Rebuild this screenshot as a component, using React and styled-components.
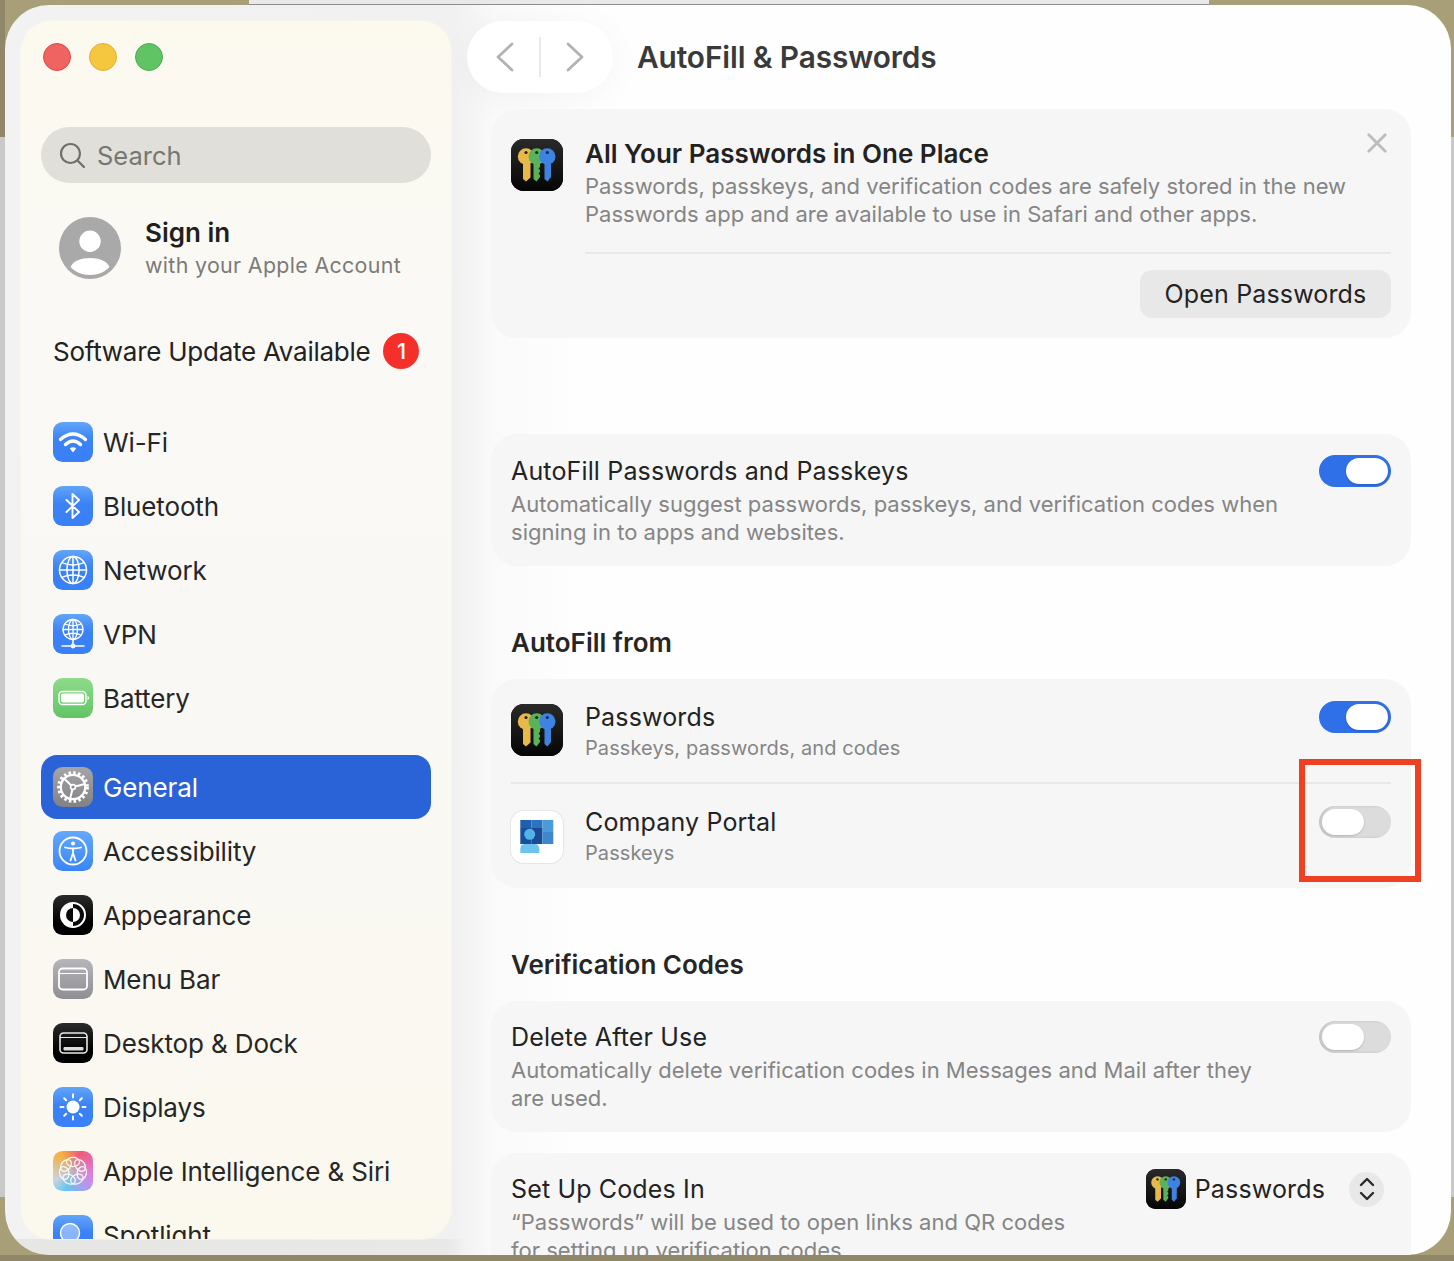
import React from "react";
import styled, { createGlobalStyle } from "styled-components";

const Global = createGlobalStyle`
  html, body { margin: 0; padding: 0; background: #a89e78; overflow: hidden; }
  * { box-sizing: border-box; }
  body { font-family: Inter, "Liberation Sans", sans-serif; -webkit-font-smoothing: antialiased; }
`;

const Desktop = styled.div`
  width: 1454px;
  height: 1261px;
  padding: 5px 3px 6px 5px;
  background:
    linear-gradient(#e9e9e9, #e9e9e9) 249px 0 / 960px 4px no-repeat,
    linear-gradient(#8e8d88, #8e8d88) 249px 4px / 960px 1px no-repeat,
    linear-gradient(#8f8767, #8f8767) 0 0 / 5px 137px no-repeat,
    linear-gradient(#c9c9c9, #c9c9c9) 0 137px / 5px 1060px no-repeat,
    linear-gradient(#c9c9c9, #c9c9c9) 1451px 137px / 3px 1060px no-repeat,
    linear-gradient(#8f8767, #8f8767) 0 1255px / 1454px 6px no-repeat,
    #a89e78;
`;

const Window = styled.div`
  height: 100%;
  display: flex;
  gap: 0;
  padding: 16px 0 0 16px;
  border-radius: 44px;
  overflow: hidden;
  background:
    linear-gradient(90deg, #e6e6e4 0, #e8e8e7 440px, rgba(255,255,255,0) 462px) 0 100% / 100% 16px no-repeat,
    linear-gradient(90deg, #f2f2f3 0, #f1f1f2 451px, #fafafa 490px, #fefefe 570px, #fefefe 100%);
`;

const Sidebar = styled.aside`
  flex: 0 0 430px;
  height: 1218px;
  padding: 22px 20px 0;
  border-radius: 30px;
  overflow: hidden;
  background: linear-gradient(#fcf9ee 0, #faf9f5 260px, #f9f8f5 640px, #fbf8ee 1218px);
  box-shadow: 0 0 0 1px rgba(250, 248, 225, 0.6);
`;

const Lights = styled.div`
  display: flex;
  gap: 18px;
  padding-left: 2px;
`;

const Light = styled.span`
  width: 28px;
  height: 28px;
  border-radius: 50%;
  background: ${(p) => p.$fill};
  border: 1px solid ${(p) => p.$edge};
`;

const SearchBox = styled.div`
  margin-top: 56px;
  height: 56px;
  border-radius: 28px;
  background: #e0dfda;
  display: flex;
  align-items: center;
  gap: 12px;
  padding-left: 18px;
  color: #77766f;
  font-size: 25.5px;
`;

const Account = styled.div`
  margin-top: 34px;
  display: flex;
  align-items: flex-start;
  gap: 24px;
  padding-left: 18px;
`;

const AccountName = styled.div`
  font-size: 26px;
  font-weight: 600;
  color: #1f1f1f;
  line-height: 32px;
`;

const AccountSub = styled.div`
  font-size: 21.4px;
  color: #7b7b78;
  line-height: 30px;
  margin-top: 1px;
  letter-spacing: 0.33px;
`;

const UpdateRow = styled.div`
  margin-top: 46px;
  height: 50px;
  padding-left: 12px;
  display: flex;
  align-items: center;
  gap: 13px;
  font-size: 26px;
  color: #222;
  letter-spacing: -0.26px;
`;

const Badge = styled.span`
  width: 36px;
  height: 36px;
  border-radius: 50%;
  background: #f5302b;
  color: #fff;
  font-size: 22px;
  font-weight: 500;
  display: flex;
  align-items: center;
  justify-content: center;
`;

const NavGroup = styled.div`
  margin-top: ${(p) => p.$top}px;
  display: flex;
  flex-direction: column;
`;

const NavRow = styled.div`
  height: 64px;
  flex: none;
  display: flex;
  align-items: center;
  gap: 10px;
  padding-left: 12px;
  border-radius: 16px;
  font-size: 26px;
  letter-spacing: -0.13px;
  color: ${(p) => (p.$active ? "#fff" : "#262626")};
  background: ${(p) => (p.$active ? "#2a63d8" : "transparent")};
`;

const Tile = styled.span`
  width: ${(p) => p.$size || 40}px;
  height: ${(p) => p.$size || 40}px;
  flex: none;
  border-radius: ${(p) => (p.$size || 40) * 0.24}px;
  background: ${(p) => p.$bg};
  box-shadow: ${(p) => p.$ring ? "0 0 0 1px #e6e6e6" : "none"};
  display: block;
  overflow: hidden;
  svg { display: block; width: 100%; height: 100%; }
`;

const Main = styled.main`
  flex: 1;
  min-width: 0;
  padding: 0 0 0 16px;
  height: 1300px;
`;

const Toolbar = styled.header`
  height: 72px;
  display: flex;
  align-items: center;
  gap: 24px;
  margin-bottom: 16px;
`;

const NavPill = styled.div`
  width: 146px;
  height: 72px;
  border-radius: 36px;
  background: #ffffff;
  box-shadow: 0 4px 34px rgba(0, 0, 0, 0.045);
  display: flex;
  align-items: center;
  justify-content: space-between;
  padding: 0 28px;
`;

const PillDivider = styled.span`
  width: 2px;
  height: 40px;
  background: #e9e9e9;
`;

const Title = styled.h1`
  margin: 0;
  font-size: 29.8px;
  font-weight: 600;
  color: #3a3a3a;
  letter-spacing: -0.1px;
`;

const Column = styled.div`
  width: 920px;
  margin-left: 24px;
  display: flex;
  flex-direction: column;
`;

const Card = styled.section`
  background: #f6f6f6;
  border-radius: 26px;
  margin-top: ${(p) => p.$top || 0}px;
  padding: 0 20px;
`;

const Promo = styled.div`
  display: flex;
  gap: 22px;
  padding-top: 30px;
`;

const PromoBody = styled.div`
  flex: 1;
  position: relative;
`;

const Strong = styled.div`
  font-size: 26px;
  font-weight: 600;
  line-height: 30px;
  color: #222;
`;

const Label = styled.div`
  font-size: 25px;
  line-height: 28px;
  color: #232323;
  letter-spacing: 0.15px;
`;

const Desc = styled.div`
  font-size: 22px;
  line-height: 28px;
  color: #858585;
  letter-spacing: 0.02px;
  margin-top: ${(p) => p.$top || 5}px;
  white-space: pre-line;
`;

const CloseBtn = styled.span`
  position: absolute;
  right: 3px;
  top: -7px;
  width: 22px;
  height: 22px;
  svg { display: block; }
`;

const CardRule = styled.div`
  height: 2px;
  background: #e8e8e8;
  margin-left: ${(p) => p.$inset || 0}px;
  margin-top: ${(p) => p.$top || 0}px;
`;

const ButtonRow = styled.div`
  display: flex;
  justify-content: flex-end;
  padding: 16px 0 20px;
`;

const PushButton = styled.div`
  width: 251px;
  height: 48px;
  border-radius: 12px;
  background: #e8e8e8;
  font-size: 25px;
  letter-spacing: 0.15px;
  color: #232323;
  display: flex;
  align-items: center;
  justify-content: center;
`;

const ToggleRow = styled.div`
  display: flex;
  align-items: flex-start;
  justify-content: space-between;
  padding: ${(p) => p.$pad};
`;

const ToggleSlot = styled.span`
  display: block;
  margin-top: ${(p) => p.$top}px;
`;

const SectionHead = styled.h2`
  margin: 57px 0 16px 20px;
  font-size: 26px;
  font-weight: 600;
  line-height: 40px;
  color: #262626;
`;

const SourceRow = styled.div`
  display: flex;
  align-items: flex-start;
  gap: 22px;
  height: ${(p) => p.$h}px;
  padding-top: ${(p) => p.$top}px;
`;

const SourceText = styled.div`
  flex: 1;
  margin-top: ${(p) => p.$top}px;
`;

const SourceSub = styled.div`
  font-size: 20px;
  line-height: 28px;
  color: #858585;
  letter-spacing: 0.08px;
  margin-top: 3px;
`;

const Track = styled.span`
  display: block;
  position: relative;
  flex: none;
  width: 72px;
  height: 32px;
  border-radius: 16px;
  background: ${(p) => (p.$on ? "#2f6fe8" : "#dcdcdc")};
  box-shadow: ${(p) => (p.$on ? "none" : "inset 2px 0 3px rgba(0,0,0,.12)")};
`;

const Knob = styled.span`
  position: absolute;
  top: 3px;
  left: ${(p) => (p.$on ? 27 : 3)}px;
  width: 42px;
  height: 26px;
  border-radius: 13px;
  background: #fff;
  box-shadow: 0 1px 2px rgba(0, 0, 0, 0.18);
`;

const Callout = styled.span`
  position: absolute;
  left: -20px;
  top: -47px;
  width: 122px;
  height: 123px;
  border: 6px solid #ee4023;
`;

const PopupValue = styled.div`
  display: flex;
  align-items: center;
  gap: 9px;
  font-size: 25px;
  letter-spacing: 0.15px;
  color: #232323;
  margin-top: -6px;
`;

const Stepper = styled.span`
  width: 35px;
  height: 35px;
  margin-left: 15px;
  margin-right: 7px;
  border-radius: 50%;
  background: #e8e8e8;
  display: flex;
  align-items: center;
  justify-content: center;
`;

const blue = "linear-gradient(#62a5f8, #3b82f6 45%, #3a80f6)";

const W = { fill: "none", stroke: "#fff", strokeLinecap: "round", strokeLinejoin: "round" };

const WifiIcon = () => (
  <svg viewBox="0 0 40 40">
    <g {...W} strokeWidth="3.4">
      <path d="M7.500 17.500Q20 6.500 32.500 17.500" />
      <path d="M12.500 22.500Q20 15.500 27.500 22.500" />
    </g>
    <path d="M16.800 26.500Q20 24 23.200 26.500L20 30.500Z" fill="#fff" />
  </svg>
);
const BluetoothIcon = () => (
  <svg viewBox="0 0 40 40">
    <path {...W} strokeWidth="1.900" d="M13.500 14L26 26L19.500 32V8L26 14L13.500 26" />
  </svg>
);
const GlobeLines = ({ cx, cy, r, sw }) => (
  <g {...W} strokeWidth={sw}>
    <circle cx={cx} cy={cy} r={r} />
    <ellipse cx={cx} cy={cy} rx={r * 0.45} ry={r} />
    <path d={`M${cx} ${cy - r}V${cy + r}`} />
    <path d={`M${cx - r} ${cy}H${cx + r}`} />
    <path d={`M${cx - r * 0.82} ${cy - r * 0.55}Q${cx} ${cy - r * 0.2} ${cx + r * 0.82} ${cy - r * 0.55}`} />
    <path d={`M${cx - r * 0.82} ${cy + r * 0.55}Q${cx} ${cy + r * 0.2} ${cx + r * 0.82} ${cy + r * 0.55}`} />
  </g>
);
const NetworkIcon = () => (
  <svg viewBox="0 0 40 40"><GlobeLines cx={20} cy={20} r={13.5} sw={1.5} /></svg>
);
const VpnIcon = () => (
  <svg viewBox="0 0 40 40">
    <GlobeLines cx={20} cy={15.5} r={10} sw={1.3} />
    <path {...W} strokeWidth="1.500" d="M20 25.500V32M9 32H31" />
    <circle cx="20" cy="32" r="2.400" fill="#fff" />
  </svg>
);
const BatteryIcon = () => (
  <svg viewBox="0 0 40 40">
    <rect x="6" y="13.500" width="27" height="13" rx="3.600" fill="none" stroke="#fff" strokeWidth="1.400" />
    <rect x="8" y="15.500" width="23" height="9" rx="2" fill="#fff" />
    <path d="M34.500 18v4q1.600-.6 1.600-2t-1.600-2z" fill="#fff" />
  </svg>
);
const GearIcon = () => (
  <svg viewBox="0 0 40 40">
    <circle cx="20" cy="20" r="12.200" fill="none" stroke="#fff" strokeWidth="2.200" />
    <circle cx="20" cy="20" r="14.300" fill="none" stroke="#fff" strokeWidth="3.200" strokeDasharray="2.500 2.300" />
    <g {...W} strokeWidth="2">
      <path d="M20 20L32 17M20 20L17 32M20 20L11 11.500" />
    </g>
    <circle cx="20" cy="20" r="2.400" fill="#8d8d90" stroke="#fff" strokeWidth="1.600" />
  </svg>
);
const AccessIcon = () => (
  <svg viewBox="0 0 40 40">
    <circle {...W} strokeWidth="1.800" cx="20" cy="20" r="13.500" />
    <circle cx="20" cy="12.600" r="2" fill="#fff" />
    <path {...W} strokeWidth="1.800" d="M12 16.500Q20 18.500 28 16.500M20 17.500V22M20 22L17.500 29.500M20 22L22.500 29.500" />
  </svg>
);
const AppearanceIcon = () => (
  <svg viewBox="0 0 40 40">
    <circle cx="20" cy="20" r="13" fill="#fff" />
    <path d="M20 9A11 11 0 0 1 20 31Z" fill="#0a0a0a" />
    <path d="M20 13A7 7 0 0 1 20 27Z" fill="#fff" />
    <path d="M20 13A7 7 0 0 0 20 27Z" fill="#0a0a0a" />
  </svg>
);
const MenuBarIcon = () => (
  <svg viewBox="0 0 40 40">
    <rect x="6" y="9.500" width="28" height="21" rx="3.500" fill="none" stroke="#fff" strokeWidth="1.800" />
    <path d="M6 14.500H34" stroke="#fff" strokeWidth="1" />
  </svg>
);
const DockIcon = () => (
  <svg viewBox="0 0 40 40">
    <rect x="7" y="10" width="27" height="20" rx="3.500" fill="none" stroke="#e9e9e9" strokeWidth="1.600" />
    <path d="M7 14.500H34" stroke="#e9e9e9" strokeWidth="1" />
    <rect x="10.500" y="24" width="20" height="3.600" rx="1" fill="#ddd" />
  </svg>
);
const SunIcon = () => (
  <svg viewBox="0 0 40 40">
    <circle cx="20" cy="20" r="6.500" fill="#fff" />
    <g {...W} strokeWidth="2">
      <path d="M20 7.500V10.500M20 29.500V32.500M7.500 20H10.500M29.500 20H32.500M11.200 11.200L13.200 13.200M26.800 26.800L28.800 28.800M11.200 28.800L13.200 26.800M26.800 13.200L28.800 11.200" />
    </g>
  </svg>
);
const IntelligenceIcon = () => (
  <svg viewBox="0 0 40 40">
    <g fill="none" stroke="#fff" strokeWidth="1.300" opacity="0.9">
      {[0, 51.4, 102.8, 154.3, 205.7, 257.1, 308.6].map((a) => (
        <ellipse key={a} cx="20" cy="11" rx="6.500" ry="4.600" transform={`rotate(${a} 20 20)`} />
      ))}
    </g>
  </svg>
);
const SpotlightIcon = () => (
  <svg viewBox="0 0 40 40">
    <circle cx="17" cy="18" r="9.500" fill="rgba(255,255,255,.4)" stroke="#fff" strokeWidth="1.400" />
  </svg>
);

const KeysIcon = () => (
  <svg viewBox="0 0 52 52">
    <defs>
      <linearGradient id="kbg" x1="0" y1="0" x2="0" y2="1">
        <stop offset="0" stopColor="#2a2a2a" />
        <stop offset="1" stopColor="#050505" />
      </linearGradient>
    </defs>
    <rect width="52" height="52" fill="url(#kbg)" />
    <circle cx="15" cy="17.500" r="8.200" fill="#e7b94a" />
    <path d="M12 22H19.500V38.500L15 42.500L12 40Z" fill="#e7b94a" />
    <circle cx="15" cy="13.500" r="1.600" fill="#2a2208" />
    <circle cx="25.700" cy="17.500" r="8.200" fill="#5cb25a" />
    <path d="M22.500 22H29V28L27.500 29.500L29 31V33L27.500 34.500L29 36V38L25.500 42.500L22.500 40Z" fill="#5cb25a" />
    <circle cx="25.700" cy="13.500" r="1.600" fill="#14300f" />
    <circle cx="36.300" cy="17.500" r="8.200" fill="#3f83e2" />
    <path d="M33.500 22H40V38L36.500 42.500L33.500 40Z" fill="#3f83e2" />
    <circle cx="36.300" cy="13.500" r="1.600" fill="#0d2a55" />
  </svg>
);

const PortalIcon = () => (
  <svg viewBox="0 0 52 52">
    <rect x="9.300" y="9" width="11" height="8" fill="#1f5fae" />
    <rect x="20.300" y="9" width="11" height="8" fill="#2a74c0" />
    <rect x="31.300" y="9" width="11" height="12" fill="#4c9bd9" />
    <rect x="9.300" y="17" width="11" height="16" fill="#174f9f" />
    <rect x="20.300" y="17" width="11" height="16" fill="#1b4a94" />
    <rect x="31.300" y="21" width="11" height="12" fill="#3e87cc" />
    <circle cx="18.700" cy="23.300" r="5.500" fill="#53b2ea" />
    <path d="M9.300 42v-4q0-5 5-5h9q5 0 5 5v4z" fill="#6cc3f0" />
  </svg>
);

const Switch = ({ on, children }) => (
  <Track $on={on}>
    <Knob $on={on} />
    {children}
  </Track>
);

const navA = [
  ["Wi-Fi", blue, WifiIcon],
  ["Bluetooth", blue, BluetoothIcon],
  ["Network", blue, NetworkIcon],
  ["VPN", blue, VpnIcon],
  ["Battery", "linear-gradient(#8edb8b, #62c466)", BatteryIcon],
];

const navB = [
  ["General", "linear-gradient(#a5a5a8, #828285)", GearIcon, true],
  ["Accessibility", "linear-gradient(#63a8fb, #3a85f7)", AccessIcon],
  ["Appearance", "linear-gradient(#2b2b2b, #000 70%)", AppearanceIcon],
  ["Menu Bar", "linear-gradient(#b6b6ba, #8e8e93)", MenuBarIcon],
  ["Desktop & Dock", "linear-gradient(#2b2b2b, #000 70%)", DockIcon],
  ["Displays", blue, SunIcon],
  ["Apple Intelligence & Siri", "radial-gradient(circle at 50% 50%, rgba(190,180,185,.85) 0, rgba(190,180,185,0) 62%), conic-gradient(from 20deg at 50% 50%, #ef5a79, #d884e8 25%, #62c6f4 50%, #c9d4de 62%, #f5b13d 85%, #ef5a79)", IntelligenceIcon],
  ["Spotlight", blue, SpotlightIcon],
];

const Nav = ({ items, top }) => (
  <NavGroup $top={top}>
    {items.map(([name, bg, Icon, active]) => (
      <NavRow key={name} $active={active}>
        <Tile $bg={bg}><Icon /></Tile>
        {name}
      </NavRow>
    ))}
  </NavGroup>
);

export default function App() {
  return (
    <Desktop>
      <Global />
      <Window>
        <Sidebar>
          <Lights>
            <Light $fill="#ef6461" $edge="#dd4a47" />
            <Light $fill="#f4c73f" $edge="#e0b030" />
            <Light $fill="#60c464" $edge="#4cad50" />
          </Lights>
          <SearchBox>
            <svg width="26" height="28" viewBox="0 0 26 28" fill="none" stroke="#6f6e68" strokeWidth="2.200" strokeLinecap="round">
              <circle cx="11.500" cy="12.500" r="9.500" />
              <path d="M18.500 19.500L25 26" />
            </svg>
            Search
          </SearchBox>
          <Account>
            <svg width="62" height="62" viewBox="0 0 62 62">
              <circle cx="31" cy="31" r="31" fill="#a9a9a9" />
              <circle cx="31" cy="24.300" r="10.700" fill="#fff" />
              <path d="M11.500 50C14 44 22 41 31 41C40 41 48 44 50.500 50C46 55 39 58 31 58C23 58 16 55 11.500 50Z" fill="#fff" />
            </svg>
            <div>
              <AccountName>Sign in</AccountName>
              <AccountSub>with your Apple Account</AccountSub>
            </div>
          </Account>
          <UpdateRow>
            Software Update Available
            <Badge>1</Badge>
          </UpdateRow>
          <Nav items={navA} top={34} />
          <Nav items={navB} top={25} />
        </Sidebar>
        <Main>
          <Toolbar>
            <NavPill>
              <svg width="20" height="32" viewBox="0 0 20 32" fill="none" stroke="#b2b2b2" strokeWidth="2.800" strokeLinecap="round" strokeLinejoin="round"><path d="M17 3L3 16L17 29" /></svg>
              <PillDivider />
              <svg width="20" height="32" viewBox="0 0 20 32" fill="none" stroke="#b2b2b2" strokeWidth="2.800" strokeLinecap="round" strokeLinejoin="round"><path d="M3 3L17 16L3 29" /></svg>
            </NavPill>
            <Title>AutoFill &amp; Passwords</Title>
          </Toolbar>
          <Column>
            <Card>
              <Promo>
                <Tile $size={52} $bg="#111"><KeysIcon /></Tile>
                <PromoBody>
                  <Strong>All Your Passwords in One Place</Strong>
                  <Desc $top={3}>{"Passwords, passkeys, and verification codes are safely stored in the new\nPasswords app and are available to use in Safari and other apps."}</Desc>
                  <CloseBtn>
                    <svg width="22" height="22" viewBox="0 0 24 24" fill="none" stroke="#bcbcbc" strokeWidth="3" strokeLinecap="round"><path d="M3 3L21 21M21 3L3 21" /></svg>
                  </CloseBtn>
                </PromoBody>
              </Promo>
              <CardRule $inset={74} $top={24} />
              <ButtonRow><PushButton>Open Passwords</PushButton></ButtonRow>
            </Card>

            <Card $top={96}>
              <ToggleRow $pad="23px 0 20px">
                <div>
                  <Label>AutoFill Passwords and Passkeys</Label>
                  <Desc>{"Automatically suggest passwords, passkeys, and verification codes when\nsigning in to apps and websites."}</Desc>
                </div>
                <ToggleSlot $top={-2}><Switch on /></ToggleSlot>
              </ToggleRow>
            </Card>

            <SectionHead>AutoFill from</SectionHead>
            <Card>
              <SourceRow $h={103} $top={25}>
                <Tile $size={52} $bg="#111"><KeysIcon /></Tile>
                <SourceText $top={-1}>
                  <Label>Passwords</Label>
                  <SourceSub>Passkeys, passwords, and codes</SourceSub>
                </SourceText>
                <ToggleSlot $top={-3}><Switch on /></ToggleSlot>
              </SourceRow>
              <CardRule />
              <SourceRow $h={104} $top={27}>
                <Tile $size={52} $bg="#fff" $ring><PortalIcon /></Tile>
                <SourceText $top={-3}>
                  <Label>Company Portal</Label>
                  <SourceSub>Passkeys</SourceSub>
                </SourceText>
                <ToggleSlot $top={-5}><Switch><Callout /></Switch></ToggleSlot>
              </SourceRow>
            </Card>

            <SectionHead>Verification Codes</SectionHead>
            <Card>
              <ToggleRow $pad="22px 0 20px">
                <div>
                  <Label>Delete After Use</Label>
                  <Desc>{"Automatically delete verification codes in Messages and Mail after they\nare used."}</Desc>
                </div>
                <ToggleSlot $top={-2}><Switch /></ToggleSlot>
              </ToggleRow>
            </Card>

            <Card $top={21}>
              <ToggleRow $pad="22px 0 20px">
                <div>
                  <Label>Set Up Codes In</Label>
                  <Desc>{"“Passwords” will be used to open links and QR codes\nfor setting up verification codes."}</Desc>
                </div>
                <PopupValue>
                  <Tile $size={40} $bg="#111"><KeysIcon /></Tile>
                  Passwords
                  <Stepper>
                    <svg width="16" height="26" viewBox="0 0 16 26" fill="none" stroke="#2a2a2a" strokeWidth="2.400" strokeLinecap="round" strokeLinejoin="round"><path d="M2 9L8 3L14 9M2 17L8 23L14 17" /></svg>
                  </Stepper>
                </PopupValue>
              </ToggleRow>
            </Card>
          </Column>
        </Main>
      </Window>
    </Desktop>
  );
}
